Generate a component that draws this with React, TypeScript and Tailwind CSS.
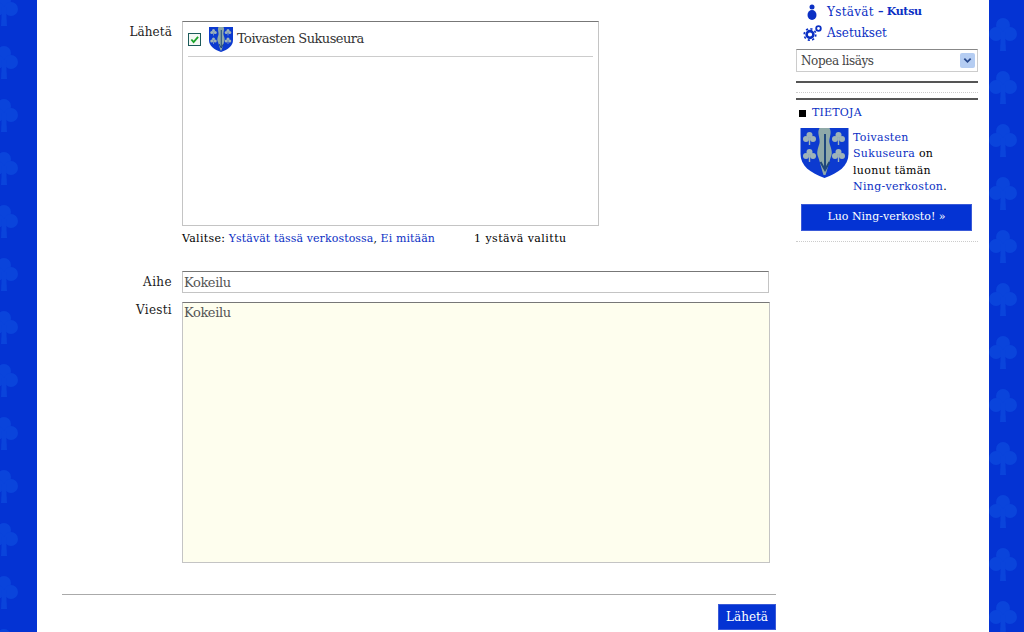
const serif = { fontFamily: '"DejaVu Serif", serif' };

const Clover = ({ className = "" }: { className?: string }) => (
  <svg viewBox="0 0 30 33" className={`w-[30px] h-[33px] shrink-0 ${className}`} fill="#0a44db">
    <circle cx="14" cy="7" r="7" />
    <circle cx="7" cy="16" r="7" />
    <circle cx="21" cy="16" r="7" />
    <path d="M12 14h4l1 19h-6z" />
  </svg>
);

const Strip = ({ side }: { side: "left" | "right" }) => (
  <div
    className={
      side === "left"
        ? "w-[37px] h-[632px] overflow-hidden bg-[#0433d3] flex flex-col gap-[20px] shrink-0"
        : "w-[35px] h-[632px] overflow-hidden bg-[#0433d3] flex flex-col gap-[20px] pt-[18px] shrink-0"
    }
  >
    {Array.from({ length: 13 }).map((_, i) => (
      <Clover key={i} className={side === "left" ? "-ml-[10px] first:-mt-[7px]" : ""} />
    ))}
  </div>
);

const Crest = ({ className }: { className: string }) => (
  <svg viewBox="0 0 48 50" className={className}>
    <path d="M0 0h48v26c0 12-10 19-24 24C10 45 0 38 0 26z" fill="#0c3ad0" />
    <path d="M19 0h10c3 5-1 10 0 15s4 9 1 15c-2 6-3 11-5 17h-2c-2-6-3-11-5-17-3-6 0-10 1-15s-3-10 0-15z" fill="#8fa9a8" />
    <path d="M24.500 6v34M20 34l4.500 8 4.500-8" fill="none" stroke="#20487c" strokeWidth="2" />
    {[[9, 7], [38, 7], [9, 24], [38, 24]].map(([x, y]) => (
      <g key={`${x}-${y}`} fill="#9fb3b8">
        <circle cx={x} cy={y} r="3" />
        <circle cx={x - 3.500} cy={y + 4} r="3" />
        <circle cx={x + 3.500} cy={y + 4} r="3" />
        <rect x={x - 0.7} y={y + 3} width="1.400" height="7" />
      </g>
    ))}
  </svg>
);

const Link = ({ children }: { children: React.ReactNode }) => (
  <a href="#" className="text-[#0b30c4]">{children}</a>
);

export default function App() {
  return (
    <div className="w-[1024px] h-[632px] overflow-hidden flex bg-white text-black" style={serif}>
      <Strip side="left" />
      <main className="w-[952px] h-[632px] flex pl-[25px]">
        <section className="w-[714px] shrink-0">
          <div className="flex pt-[21px]">
            <div className="w-[110px] text-right text-[12px] leading-[16px] pt-[3px] tracking-[0.1px] text-[#222]">Lähetä</div>
            <div className="ml-[10px]">
              <div className="w-[417px] h-[205px] border border-[#c4c4c4] border-t-[#777] px-[5px]">
                <div className="h-[35px] border-b border-[#ccc] flex items-center">
                  <span className="w-[13px] h-[13px] border border-[#1c5a5a] bg-[#f4f8f4] flex items-center justify-center">
                    <svg viewBox="0 0 10 10" className="w-[9px] h-[9px]">
                      <path d="M1.500 5l2.500 3 5-6" fill="none" stroke="#1aa32a" strokeWidth="2" />
                    </svg>
                  </span>
                  <Crest className="w-[24px] h-[25px] ml-[8px]" />
                  <span className="ml-[4px] text-[13px] tracking-[-0.55px] text-[#333]">Toivasten Sukuseura</span>
                </div>
              </div>
              <div className="flex h-[24px] items-center text-[11px] mt-[1px]">
                <span className="w-[292px]">
                  <span className="tracking-[0.3px]">Valitse:</span>{" "}
                  <span className="tracking-[0.08px]"><Link>Ystävät tässä verkostossa</Link>, <Link>Ei mitään</Link></span>
                </span>
                <span className="tracking-[0.45px]">1 ystävä valittu</span>
              </div>
            </div>
          </div>

          <div className="flex mt-[20px]">
            <div className="w-[110px] text-right text-[12px] leading-[16px] pt-[3px] tracking-[0.4px] text-[#222]">Aihe</div>
            <input
              readOnly
              value="Kokeilu"
              className="ml-[10px] w-[587px] h-[22px] border border-[#c4c4c4] border-t-[#777] px-[1px] text-[13px] tracking-[-0.4px] text-[#555] outline-none"
            />
          </div>

          <div className="flex mt-[9px]">
            <div className="w-[110px] text-right text-[12px] leading-[16px] tracking-[0.3px] text-[#222]">Viesti</div>
            <textarea
              readOnly
              value="Kokeilu"
              className="ml-[10px] w-[588px] h-[261px] border border-[#c4c4c4] border-t-[#777] bg-[#fefeee] px-[1px] pt-[1px] text-[13px] leading-[17px] tracking-[-0.4px] text-[#555] outline-none resize-none"
            />
          </div>

          <div className="mt-[31px] border-t border-[#aaa] pt-[9px] flex justify-end">
            <button className="w-[58px] h-[26px] bg-[#0433d3] text-white text-[12px] border border-[#3a5ad8]">Lähetä</button>
          </div>
        </section>

        <aside className="w-[182px] ml-[20px] shrink-0">
          <div className="h-[22px] pt-[1px] flex items-center text-[12px] text-[#0b30c4]">
            <svg viewBox="0 0 10 16" className="w-[10px] h-[16px] ml-[11px]" fill="#0b30c4">
              <circle cx="5" cy="3" r="2.500" />
              <ellipse cx="5" cy="11" rx="4.500" ry="5" />
            </svg>
            <span className="ml-[10px] tracking-[0.3px]">Ystävät</span>
            <span className="ml-[4px] pt-[2px] text-[11px] font-bold tracking-[-0.3px]">– Kutsu</span>
          </div>
          <div className="h-[22px] flex items-center text-[12px] text-[#0b30c4]">
            <svg viewBox="0 0 20 16" className="w-[20px] h-[16px] ml-[7px]">
              <circle cx="7" cy="9.500" r="5.800" fill="none" stroke="#0b30c4" strokeWidth="1.600" strokeDasharray="2.200 2.300" />
              <circle cx="7" cy="9.500" r="3.400" fill="none" stroke="#0b30c4" strokeWidth="2.600" />
              <circle cx="15.500" cy="3.500" r="2.300" fill="none" stroke="#0b30c4" strokeWidth="1.800" />
            </svg>
            <span className="ml-[4px]">Asetukset</span>
          </div>
          <div className="mt-[5px] h-[23px] border border-[#ccc] border-t-[#888] flex items-center justify-between pl-[4px] pr-[2px] text-[12px] tracking-[-0.4px] text-[#444]">
            <span>Nopea lisäys</span>
            <span className="w-[15px] h-[15px] bg-[#b5cdf2] rounded-[2px] flex items-center justify-center">
              <svg viewBox="0 0 10 10" className="w-[9px] h-[9px]">
                <path d="M1.500 3l3.500 3.500L8.500 3" fill="none" stroke="#27488c" strokeWidth="2" />
              </svg>
            </span>
          </div>
          <div className="mt-[9px] border-t-2 border-[#555]" />
          <div className="mt-[9px] border-t border-dotted border-[#ccc]" />
          <div className="mt-[5px] border-t-2 border-[#555]" />
          <div className="mt-[7px] flex items-center h-[13px] text-[11px] tracking-[0.2px]">
            <span className="w-[7px] h-[7px] bg-black ml-[3px]" />
            <span className="ml-[6px]"><Link>TIETOJA</Link></span>
          </div>
          <div className="flex mt-[8px] ml-[4px]">
            <Crest className="w-[49px] h-[50px] shrink-0" />
            <p className="ml-[4px] pt-[2px] text-[11px] leading-[16.400px] tracking-[0.3px]">
              <Link>Toivasten</Link>
              <br />
              <Link>Sukuseura</Link> on
              <br />
              luonut tämän
              <br />
              <Link>Ning-verkoston</Link>.
            </p>
          </div>
          <button className="mt-[8px] ml-[5px] w-[171px] h-[27px] block bg-[#0433d3] border border-[#3a5ad8] text-white text-[11px]">
            Luo Ning-verkosto! »
          </button>
          <div className="mt-[10px] border-t border-dotted border-[#ccc]" />
        </aside>
      </main>
      <Strip side="right" />
    </div>
  );
}
